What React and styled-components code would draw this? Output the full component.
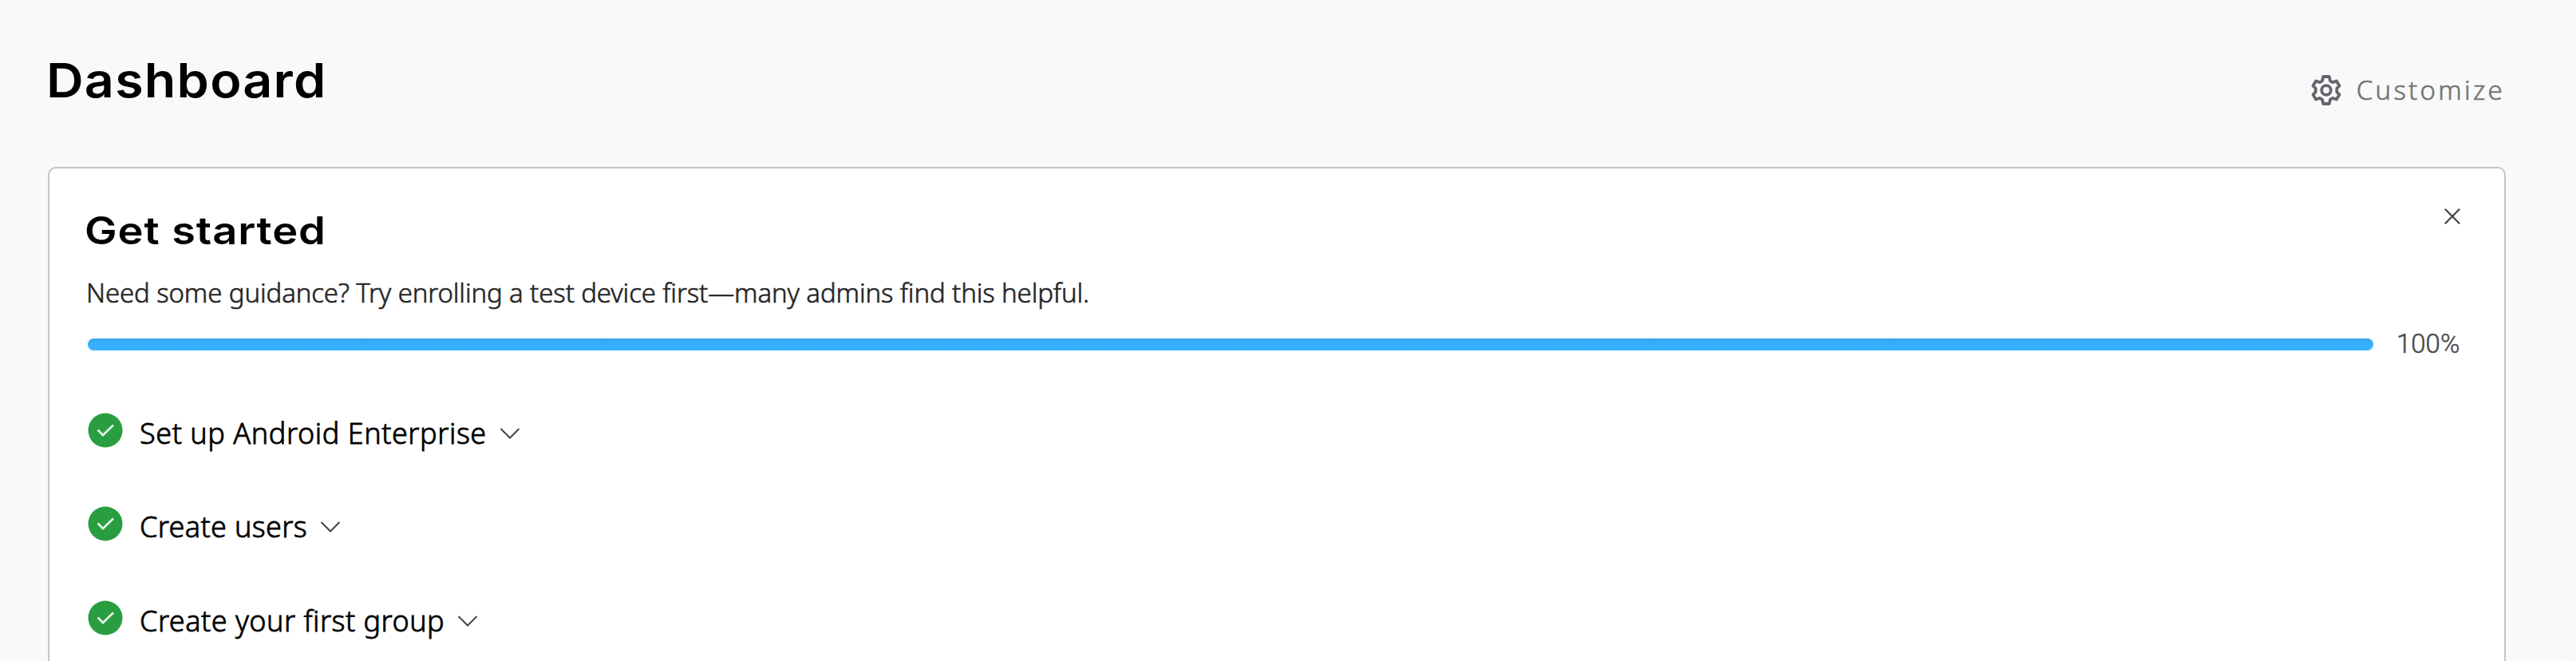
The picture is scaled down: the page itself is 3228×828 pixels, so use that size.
import React from "react";
import styled, { createGlobalStyle } from "styled-components";

const GlobalStyle = createGlobalStyle`
  *, *::before, *::after { box-sizing: border-box; }
  body { margin: 0; background: #f9f9f9; }
`;

const Page = styled.main`
  height: 828px;
  width: 100%;
  overflow: hidden;
  padding: 0 74px 0 60px;
  border-right: 14px solid #f8f8f8;
  background: #f9f9f9;
  font-family: "Noto Sans", "Open Sans", sans-serif;
  color: #000;
`;

const Header = styled.header`
  height: 209px;
  display: flex;
  justify-content: space-between;
  align-items: flex-start;
`;

const PageTitle = styled.h1`
  margin: 65px 0 0 -2px;
  font: 600 59px/72px Inter, sans-serif;
  letter-spacing: 1.1px;
  transform: scaleX(1.095);
  transform-origin: left;
  white-space: nowrap;
`;

const CustomizeButton = styled.button`
  display: flex;
  align-items: center;
  gap: 18px;
  margin: 92px 1px 0 0;
  padding: 0;
  border: 0;
  background: none;
  color: #757575;
  font: 300 33px/42px "Noto Sans", sans-serif;
  -webkit-text-stroke: 0.6px currentColor;
  letter-spacing: 3.25px;
  white-space: nowrap;
`;

const Card = styled.section`
  height: 640px;
  padding: 32px 53px 0 46px;
  border: 2px solid #c4c4c4;
  border-radius: 10px;
  background: #fff;
`;

const CardHeader = styled.div`
  display: flex;
  justify-content: space-between;
  align-items: flex-start;
  height: 84px;
`;

const CardTitle = styled.h2`
  margin: 16px 0 0 -2px;
  font: 600 48px/60px Inter, sans-serif;
  letter-spacing: 0.8px;
  transform: scaleX(1.13);
  transform-origin: left;
  white-space: nowrap;
`;

const CloseButton = styled.button`
  margin: 17px 1px 0 0;
  padding: 0;
  border: 0;
  background: none;
  line-height: 0;
`;

const Description = styled.p`
  margin: 17px 0 0;
  font-size: 33px;
  line-height: 46px;
  font-weight: 300;
  -webkit-text-stroke: 0.6px currentColor;
  letter-spacing: -0.13px;
  color: #252525;
  white-space: nowrap;
`;

const ProgressRow = styled.div`
  display: flex;
  align-items: center;
  gap: 27px;
  height: 46px;
  margin: 18px 0 0;
`;

const Track = styled.div`
  flex: 1;
  height: 19px;
  padding: 1px;
  border: 1px solid #e9f1f7;
  border-radius: 10px;
  background: #fff;
`;

const Fill = styled.div`
  height: 15px;
  border-radius: 8px;
  background: linear-gradient(#34a5ef, #38b0ff 55%);
`;

const Percent = styled.span`
  width: 82px;
  font: 300 33px/44px Roboto, sans-serif;
  -webkit-text-stroke: 0.5px currentColor;
  color: #4a4a4a;
  white-space: nowrap;
`;

const Steps = styled.ul`
  list-style: none;
  margin: 53px 0 0;
  padding: 0;
`;

const Step = styled.li`
  display: flex;
  height: 117.4px;
  align-items: flex-start;
`;

const StatusIcon = styled.svg`
  flex: none;
  margin: 10px 21px 0 2px;
`;

const StepLabel = styled.span`
  font-size: 36px;
  line-height: 54px;
  font-weight: 300;
  -webkit-text-stroke: 0.8px currentColor;
  letter-spacing: ${(p) => p.$tracking}px;
  margin-top: 9px;
  white-space: nowrap;
`;

const Chevron = styled.svg`
  flex: none;
  margin: 29px 0 0 16px;
`;

const STEPS = [
  { label: "Set up Android Enterprise", tracking: 0.55 },
  { label: "Create users", tracking: 0.35 },
  { label: "Create your first group", tracking: 0.48 },
];

function GearIcon() {
  return (
    <svg width="40" height="40" viewBox="0 0 40 40" fill="none" stroke="#64656e" strokeWidth="3.8" strokeLinejoin="round">
      <path d="M16.3 3h7.4L25 8.3l3 1.8 4.9-1.6 3.6 5.9-3.2 3.3v4.6l3.2 3.3-3.6 5.9-4.9-1.6-3 1.8-1.3 5.3h-7.4L15 31.7l-3-1.8-4.9 1.6-3.6-5.9 3.2-3.3v-4.6l-3.2-3.3 3.6-5.9 4.9 1.6 3-1.8z" />
      <circle cx="20" cy="20" r="5.8" />
    </svg>
  );
}

export default function App() {
  return (
    <>
      <GlobalStyle />
      <Page>
        <Header>
          <PageTitle>Dashboard</PageTitle>
          <CustomizeButton>
            <GearIcon />
            <span>Customize</span>
          </CustomizeButton>
        </Header>
        <Card>
          <CardHeader>
            <CardTitle>Get started</CardTitle>
            <CloseButton aria-label="Close">
              <svg width="22" height="22" viewBox="0 0 22 22" fill="none" stroke="#444" strokeWidth="2.2">
                <path d="M1.8 1.8l18.4 18.4M20.2 1.8L1.8 20.2" />
              </svg>
            </CloseButton>
          </CardHeader>
          <Description>
            Need some guidance? Try enrolling a test device first—many admins find this helpful.
          </Description>
          <ProgressRow>
            <Track>
              <Fill />
            </Track>
            <Percent>100%</Percent>
          </ProgressRow>
          <Steps>
            {STEPS.map((s) => (
              <Step key={s.label}>
                <StatusIcon width="44" height="44" viewBox="0 0 44 44">
                  <circle cx="22" cy="22" r="21.5" fill="#289e40" />
                  <path d="M12.5 21.5l6.5 6.5L32 15.5" fill="none" stroke="#dff3e3" strokeWidth="2.8" />
                </StatusIcon>
                <StepLabel $tracking={s.tracking}>{s.label}</StepLabel>
                <Chevron width="26" height="14" viewBox="0 0 26 14" fill="none" stroke="#444" strokeWidth="2">
                  <path d="M1.5 1l11.5 11.5L24.5 1" />
                </Chevron>
              </Step>
            ))}
          </Steps>
        </Card>
      </Page>
    </>
  );
}
